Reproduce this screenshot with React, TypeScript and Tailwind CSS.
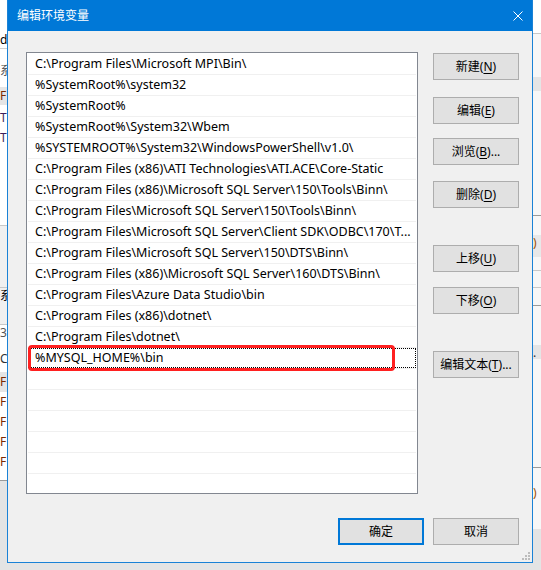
const paths = [
  'C:\\Program Files\\Microsoft MPI\\Bin\\',
  '%SystemRoot%\\system32',
  '%SystemRoot%',
  '%SystemRoot%\\System32\\Wbem',
  '%SYSTEMROOT%\\System32\\WindowsPowerShell\\v1.0\\',
  'C:\\Program Files (x86)\\ATI Technologies\\ATI.ACE\\Core-Static',
  'C:\\Program Files (x86)\\Microsoft SQL Server\\150\\Tools\\Binn\\',
  'C:\\Program Files\\Microsoft SQL Server\\150\\Tools\\Binn\\',
  'C:\\Program Files\\Microsoft SQL Server\\Client SDK\\ODBC\\170\\T...',
  'C:\\Program Files\\Microsoft SQL Server\\150\\DTS\\Binn\\',
  'C:\\Program Files (x86)\\Microsoft SQL Server\\160\\DTS\\Binn\\',
  'C:\\Program Files\\Azure Data Studio\\bin',
  'C:\\Program Files (x86)\\dotnet\\',
  'C:\\Program Files\\dotnet\\',
  '%MYSQL_HOME%\\bin',
  '',
  '',
  '',
  '',
  '',
  '',
];

const selected = 14;

function Button({
  label,
  mn,
  tail = '',
  className = '',
}: {
  label: string;
  mn?: string;
  tail?: string;
  className?: string;
}) {
  return (
    <div
      className={`flex h-[27px] w-[86px] items-center justify-center border border-[#adadad] bg-[#e1e1e1] text-[12px] text-black ${className}`}
    >
      {label}
      {mn && (
        <>
          (<span className="underline underline-offset-[2px]">{mn}</span>)
        </>
      )}
      {tail}
    </div>
  );
}

function LeftStrip() {
  return (
    <div className="flex h-[570px] w-[7px] shrink-0 flex-col overflow-hidden bg-white text-[12px] leading-[16px]">
      <div className="h-[32px]" />
      <div className="h-[16px] text-black">d</div>
      <div className="h-px bg-[#d0d0d0]" />
      <div className="h-[14px]" />
      <div className="h-[16px] text-[#555]">系</div>
      <div className="h-[8px]" />
      <div className="h-[18px] bg-[#e5e5e5] pt-[1px] text-[#7a2a00]">F</div>
      <div className="h-[5px]" />
      <div className="h-[18px] text-[#3c1f5a]">T</div>
      <div className="h-[2px]" />
      <div className="h-[18px] text-[#3c1f5a]">T</div>
      <div className="h-[77px]" />
      <div className="h-px bg-[#c8c8c8]" />
      <div className="h-[61px] bg-[#f0f0f0]" />
      <div className="h-px bg-[#c8c8c8]" />
      <div className="h-[16px] bg-[#f0f0f0] text-black">系</div>
      <div className="h-[20px] bg-[#f0f0f0]" />
      <div className="h-px bg-[#c8c8c8]" />
      <div className="h-[16px] text-[#555]">3</div>
      <div className="h-[10px]" />
      <div className="h-[16px] text-[#333]">C</div>
      <div className="h-[5px]" />
      <div className="h-[20px] bg-[#e5e5e5] pt-[2px] text-[#7a2a00]">F</div>
      <div className="h-[20px] pt-[2px] text-[#7a2a00]">F</div>
      <div className="h-[20px] pt-[2px] text-[#7a2a00]">F</div>
      <div className="h-[20px] pt-[2px] text-[#7a2a00]">F</div>
      <div className="h-[20px] pt-[2px] text-[#7a2a00]">F</div>
      <div className="h-[8px]" />
      <div className="h-px bg-[#9a9a9a]" />
      <div className="flex-1 bg-[#e4e4e4]" />
    </div>
  );
}

function RightStrip() {
  return (
    <div className="flex h-[570px] w-[8px] shrink-0 flex-col overflow-hidden bg-[#f7f7f7] text-[12px] leading-[16px]">
      <div className="h-[33px] bg-white" />
      <div className="h-px bg-[#c8c8c8]" />
      <div className="h-[43px]" />
      <div className="h-[14px] bg-[#e5e5e5]" />
      <div className="h-[124px]" />
      <div className="h-px bg-[#9a9a9a]" />
      <div className="h-[19px]" />
      <div className="h-[22px] bg-[#e8e8e8] text-[#a05000]">)</div>
      <div className="h-[13px]" />
      <div className="h-px bg-[#c8c8c8]" />
      <div className="h-[16px]" />
      <div className="h-px bg-[#c8c8c8]" />
      <div className="h-[17px]" />
      <div className="h-px bg-[#9a9a9a]" />
      <div className="h-[39px]" />
      <div className="h-[14px] bg-[#e5e5e5] text-[#333]">.</div>
      <div className="h-[108px]" />
      <div className="h-px bg-[#9a9a9a]" />
      <div className="h-[17px]" />
      <div className="h-[22px] text-[#a05000]">)</div>
      <div className="h-[22px]" />
      <div className="flex-1 bg-[#e4e4e4]" />
    </div>
  );
}

export default function App() {
  return (
    <div className="flex h-[570px] w-[541px] overflow-hidden bg-[#e4e4e4] font-['Noto_Sans','Noto_Sans_CJK_SC',sans-serif]">
      <LeftStrip />

      {/* dialog */}
      <div className="relative flex h-[563px] w-[526px] shrink-0 flex-col border-x border-b border-[#1a82d6] bg-[#f0f0f0]">
        <div className="flex h-[31px] shrink-0 items-center bg-[#0078d7] pl-[9px] pr-[9px] text-[12px] text-white">
          <span>编辑环境变量</span>
          <svg className="ml-auto" width="10" height="10" viewBox="0 0 10 10">
            <path d="M0.5 0.5 L9.5 9.5 M9.5 0.5 L0.5 9.5" stroke="white" strokeWidth="1" />
          </svg>
        </div>

        <div className="flex pl-[18px] pr-[13px] pt-[21px]">
          <div className="relative h-[442px] w-[392px] overflow-hidden border border-[#828790] bg-white pt-px text-[12.5px] text-black">
            {paths.map((p, i) => (
              <div key={i} className="mx-px h-[21px] border-b border-[#f0f0f0]">
                <div
                  className={`h-[20px] whitespace-nowrap overflow-hidden border pl-[6px] leading-[18px] ${
                    i === selected ? 'border-dotted border-black' : 'border-transparent'
                  }`}
                >
                  {p}
                </div>
              </div>
            ))}
            {/* red annotation box */}
            <div className="absolute left-px top-[292px] h-[26px] w-[367px] rounded-[4px] border-[3px] border-[#ff2020]" />
          </div>

          <div className="ml-[15px] flex flex-col">
            <Button label="新建" mn="N" className="mt-px" />
            <Button label="编辑" mn="E" className="mt-[17px]" />
            <Button label="浏览" mn="B" tail="..." className="mt-[14px]" />
            <Button label="删除" mn="D" className="mt-[16px]" />
            <Button label="上移" mn="U" className="mt-[37px]" />
            <Button label="下移" mn="O" className="mt-[15px]" />
            <Button label="编辑文本" mn="T" tail="..." className="mt-[37px]" />
          </div>
        </div>

        <div className="mt-[24px] flex justify-end gap-[9px] pr-[13px]">
          <div className="flex h-[27px] w-[86px] items-center justify-center border-2 border-[#0078d7] bg-[#e1e1e1] text-[12px] text-black">
            确定
          </div>
          <Button label="取消" />
        </div>

        {/* resize grip */}
        <svg className="absolute bottom-[1px] right-[1px]" width="9" height="9" viewBox="0 0 9 9">
          <rect x="6" y="0" width="2" height="2" fill="#bcbcbc" />
          <rect x="3" y="3" width="2" height="2" fill="#bcbcbc" />
          <rect x="6" y="3" width="2" height="2" fill="#bcbcbc" />
          <rect x="0" y="6" width="2" height="2" fill="#bcbcbc" />
          <rect x="3" y="6" width="2" height="2" fill="#bcbcbc" />
          <rect x="6" y="6" width="2" height="2" fill="#bcbcbc" />
        </svg>
      </div>

      <RightStrip />
    </div>
  );
}
